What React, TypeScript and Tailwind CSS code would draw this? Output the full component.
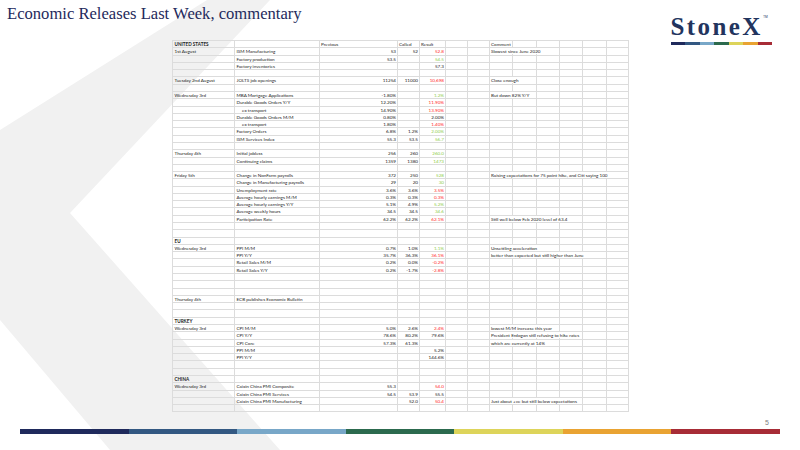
import React from "react";

type Row = {
  a?: string;
  b?: string;
  prev?: string;
  called?: string;
  res?: string;
  tone?: "r" | "g";
  comment?: string;
  bold?: boolean;
  indent?: boolean;
  head?: boolean;
};

const rows: Row[] = [
  { a: "UNITED STATES", bold: true, prev: "Previous", called: "Called", res: "Result", comment: "Comment", head: true },
  { a: "1st August", b: "ISM Manufacturing", prev: "53", called: "52", res: "52.8", tone: "r", comment: "Slowest since June 2020" },
  { b: "Factory production", prev: "53.5", res: "54.5", tone: "g" },
  { b: "Factory inventories", res: "57.3" },
  {},
  { a: "Tuesday 2nd August", b: "JOLTS job openings", prev: "11254", called: "11000", res: "10,698", tone: "r", comment: "Close enough" },
  {},
  { a: "Wednesday 3rd", b: "MBA Mortgage Applications", prev: "-1.80%", res: "1.2%", tone: "g", comment: "But down 82% Y/Y" },
  { b: "Durable Goods Orders Y/Y", prev: "12.20%", res: "11.90%", tone: "r" },
  { b: "ex transport", indent: true, prev: "14.90%", res: "13.90%", tone: "r" },
  { b: "Durable Goods Orders M/M", prev: "0.80%", res: "2.00%" },
  { b: "ex transport", indent: true, prev: "1.80%", res: "1.40%", tone: "r" },
  { b: "Factory Orders", prev: "6.8%", called: "1.2%", res: "2.00%", tone: "g" },
  { b: "ISM Services Index", prev: "55.3", called: "53.5", res: "56.7", tone: "g" },
  {},
  { a: "Thursday 4th", b: "Initial jobless", prev: "256", called: "260", res: "260.0", tone: "g" },
  { b: "Continuing claims", prev: "1359", called: "1380", res: "1473", tone: "g" },
  {},
  { a: "Friday 5th", b: "Change in NonFarm payrolls", prev: "372", called: "250", res: "528", tone: "g", comment: "Raising expectations for 75 point hike, and Citi saying 100" },
  { b: "Change in Manufacturing payrolls", prev: "29", called: "20", res: "30", tone: "g" },
  { b: "Unemployment rate", prev: "3.6%", called: "3.6%", res: "3.5%", tone: "r" },
  { b: "Average hourly earnings M/M", prev: "0.3%", called: "0.3%", res: "0.3%", tone: "r" },
  { b: "Average hourly earnings Y/Y", prev: "5.1%", called: "4.9%", res: "5.2%", tone: "g" },
  { b: "Average weekly hours", prev: "34.5", called: "34.5", res: "34.6", tone: "g" },
  { b: "Participation Rate", prev: "62.2%", called: "62.2%", res: "62.1%", tone: "r", comment: "Still well below Feb 2020 level of 63.4" },
  {},
  {},
  { a: "EU", bold: true },
  { a: "Wednesday 3rd", b: "PPI M/M", prev: "0.7%", called: "1.0%", res: "1.1%", tone: "g", comment: "Unsettling acceleration" },
  { b: "PPI Y/Y", prev: "35.7%", called: "36.3%", res: "36.1%", tone: "r", comment: "better than expected but still higher than June" },
  { b: "Retail Sales M/M", prev: "0.2%", called: "0.0%", res: "-0.2%", tone: "r" },
  { b: "Retail Sales Y/Y", prev: "0.2%", called: "-1.7%", res: "-2.8%", tone: "r" },
  {},
  {},
  {},
  { a: "Thursday 4th", b: "ECB publishes Economic Bulletin" },
  {},
  {},
  { a: "TURKEY", bold: true },
  { a: "Wednesday 3rd", b: "CPI M/M", prev: "5.0%", called: "2.6%", res: "2.4%", tone: "r", comment: "lowest M/M increase this year" },
  { b: "CPI Y/Y", prev: "78.6%", called: "80.2%", res: "79.6%", comment: "President Erdogan still refusing to hike rates" },
  { b: "CPI Core", prev: "57.3%", called: "61.3%", comment: "which are currently at 14%" },
  { b: "PPI M/M", res: "5.2%" },
  { b: "PPI Y/Y", res: "144.6%" },
  {},
  {},
  { a: "CHINA", bold: true },
  { a: "Wednesday 3rd", b: "Caixin China PMI Composite", prev: "55.3", res: "54.0", tone: "r" },
  { b: "Caixin China PMI Services", prev: "54.5", called: "53.9", res: "55.5" },
  { b: "Caixin China PMI Manufacturing", called: "52.0", res: "50.4", tone: "r", comment: "Just about +ve but still below expectations" },
  {},
];

const stripes = ["#1f2a5c", "#335882", "#78a7c8", "#2c6a4e", "#ddd45a", "#e9a332", "#a72c36"];

const cell = "border-r border-b border-[#dcdcdc] overflow-visible whitespace-nowrap leading-[7px] relative";

function Sheet() {
  return (
    <div
      className="ml-[172px] w-[457px] border-l border-t border-[#dcdcdc] grid grid-cols-[62px_85px_78px_22px_26px_22px_22px_23px_24px_23px_23px_24px_22px] auto-rows-[7.29px] text-[4.6px] text-[#222]"
      style={{ fontFamily: "Lato, 'Open Sans', sans-serif" }}
    >
      {rows.map((r, i) => {
        const tone = r.tone === "r" ? "text-[#ff2a2a]" : r.tone === "g" ? "text-[#8fce4c]" : "";
        const num = r.head ? "text-left pl-[1px]" : "text-right pr-[1px]";
        return (
          <React.Fragment key={i}>
            <div className={`${cell} pl-[1.5px] ${r.bold ? "font-bold" : ""}`}>{r.a}</div>
            <div className={`${cell} ${r.indent ? "pl-[7px]" : "pl-[1.5px]"}`}>{r.b}</div>
            <div className={`${cell} ${num}`}>{r.prev}</div>
            <div className={`${cell} ${num}`}>{r.called}</div>
            <div className={`${cell} ${num} ${r.head ? "" : tone}`}>{r.res}</div>
            <div className={cell} />
            <div className={cell} />
            <div className={`${cell} pl-[1px]`}>
              {r.comment && <span className="relative z-10 bg-white pr-[1px]">{r.comment}</span>}
            </div>
            <div className={cell} />
            <div className={cell} />
            <div className={cell} />
            <div className={cell} />
            <div className={cell} />
          </React.Fragment>
        );
      })}
    </div>
  );
}

export default function App() {
  return (
    <div className="relative w-[800px] h-[450px] overflow-hidden bg-white">
      {/* faint chevron watermark behind the slide */}
      <svg className="absolute inset-0" width="800" height="450" viewBox="0 0 800 450">
        <polygon points="207,0 270,0 70,213 280,450 110,450 0,320 0,130" fill="#f1f1f1" />
      </svg>

      <div className="relative flex flex-col h-full">
        <div className="flex items-start justify-between h-[40px]">
          <h1
            className="ml-[7px] mt-[4px] text-[16.6px] leading-[20px] text-[#1f2a5c]"
            style={{ fontFamily: "'Liberation Serif', 'Times New Roman', serif" }}
          >
            Economic Releases Last Week, commentary
          </h1>
          <div className="mr-[28px] mt-[15px] flex flex-col items-start">
            <div className="relative">
              <span
                className="block text-[25px] leading-[24px] font-bold tracking-[2.4px] text-[#22345e]"
                style={{ fontFamily: "'Liberation Serif', 'Times New Roman', serif" }}
              >
                StoneX
              </span>
              <span className="absolute -right-[5px] top-0 text-[3px] text-[#22345e]">TM</span>
            </div>
            <div className="flex mt-[3px] h-[3px]">
              {stripes.map((c) => (
                <div key={c} className="w-[14.5px] h-full" style={{ background: c }} />
              ))}
            </div>
          </div>
        </div>

        <Sheet />

        <div className="flex justify-end pr-[31px] mt-[7px] text-[7px] leading-[8px] text-[#7f7f7f]" style={{ fontFamily: "'Liberation Sans', sans-serif" }}>
          5
        </div>
        <div className="flex mx-[20px] mt-[2px] h-[5px]">
          {stripes.map((c) => (
            <div key={c} className="flex-1 h-full" style={{ background: c }} />
          ))}
        </div>
      </div>
    </div>
  );
}
